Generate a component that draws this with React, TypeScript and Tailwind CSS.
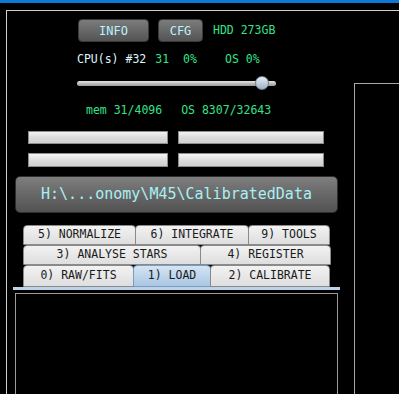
const mono = { fontFamily: '"DejaVu Sans Mono", "Liberation Mono", monospace' };

type Tab = { label: string; w: number; active?: boolean };

const tabRows: { h: number; tabs: Tab[] }[] = [
  {
    h: 20,
    tabs: [
      { label: "5) NORMALIZE", w: 113 },
      { label: "6) INTEGRATE", w: 114 },
      { label: "9) TOOLS", w: 82 },
    ],
  },
  {
    h: 20,
    tabs: [
      { label: "3) ANALYSE STARS", w: 178 },
      { label: "4) REGISTER", w: 131 },
    ],
  },
  {
    h: 22,
    tabs: [
      { label: "0) RAW/FITS", w: 111 },
      { label: "1) LOAD", w: 78, active: true },
      { label: "2) CALIBRATE", w: 120 },
    ],
  },
];

function GrayBar({ w }: { w: number }) {
  return (
    <div
      className="h-full border border-[#8c8c8c] bg-gradient-to-b from-[#f4f4f4] via-[#dcdcdc] to-[#cfcfcf]"
      style={{ width: w }}
    />
  );
}

export default function App() {
  return (
    <div className="w-[399px] h-[394px] bg-black overflow-hidden flex flex-col" style={mono}>
      <div className="h-[3px] bg-[#0a78d4]" />
      <div className="flex-1 pt-[7px] pl-[6px] flex flex-col">
        <div className="flex-1 border-t border-l border-[#d0d0d0] flex">
          {/* left column */}
          <div className="w-[340px] flex flex-col">
            <div className="mt-[8px] ml-[71px] flex items-center h-[23px]">
              <button className="w-[71px] h-[23px] rounded-[4px] border border-[#3a3a3a] bg-gradient-to-b from-[#7c7c7c] to-[#545454] text-[12px] text-[#b6f3ff]">
                INFO
              </button>
              <button className="ml-[9px] w-[45px] h-[23px] rounded-[4px] border border-[#3a3a3a] bg-gradient-to-b from-[#7c7c7c] to-[#545454] text-[12px] text-[#b6f3ff]">
                CFG
              </button>
              <span className="ml-[10px] text-[11.5px] text-[#35e28a]">HDD 273GB</span>
            </div>

            <div className="mt-[10px] ml-[70px] h-[14px] flex items-center text-[11.5px] leading-[14px] whitespace-pre">
              <span className="text-[#dff6ff]">CPU(s) #32</span>
              <span className="ml-[9px] text-[#35e28a]">31</span>
              <span className="ml-[14px] text-[#35e28a]">0%</span>
              <span className="ml-[28px] text-[#35e28a]">OS 0%</span>
            </div>

            <div className="mt-[10px] ml-[70px] w-[199px] h-[14px] relative flex items-center">
              <div className="w-full h-[5px] rounded-full bg-gradient-to-b from-[#e4e4e4] to-[#9a9a9a]" />
              <div className="absolute left-[178px] top-[0px] w-[14px] h-[14px] rounded-full border border-[#6f7f90] bg-gradient-to-b from-[#e6eef6] to-[#9fb3c8]" />
            </div>

            <div className="mt-[13px] ml-[79px] h-[14px] flex items-center text-[11.5px] leading-[14px] text-[#35e28a] whitespace-pre">
              <span>mem 31/4096</span>
              <span className="ml-[19px]">OS 8307/32643</span>
            </div>

            <div className="mt-[14px] ml-[21px] h-[13px] flex gap-[10px]">
              <GrayBar w={140} />
              <GrayBar w={146} />
            </div>
            <div className="mt-[9px] ml-[21px] h-[14px] flex gap-[10px]">
              <GrayBar w={140} />
              <GrayBar w={146} />
            </div>

            <div className="mt-[9px] ml-[8px] w-[323px] h-[37px] rounded-[5px] border border-[#2e2e2e] bg-gradient-to-b from-[#7e7e7e] to-[#525252] flex items-center justify-center text-[15px] text-[#a8f0f4]">
              H:\...onomy\M45\CalibratedData
            </div>

            <div className="mt-[12px] ml-[16px] flex flex-col">
              {tabRows.map((row, i) => (
                <div key={i} className="flex" style={{ height: row.h }}>
                  {row.tabs.map((t, j) => (
                    <div
                      key={t.label}
                      className={
                        t.active
                          ? "h-full flex items-center justify-center rounded-t-[4px] border border-[#7b9cc2] bg-gradient-to-b from-[#d4e4f4] to-[#aac6e2] text-[11.5px] text-[#1a1a1a]"
                          : "h-full flex items-center justify-center rounded-t-[4px] border border-[#8a8a8a] bg-gradient-to-b from-[#f2f2f2] to-[#dedede] text-[11.5px] text-[#1a1a1a]"
                      }
                      style={{ width: t.w, marginLeft: j === 0 ? 0 : -1 }}
                    >
                      {t.label}
                    </div>
                  ))}
                </div>
              ))}
            </div>

            <div className="ml-[6px] w-[327px] h-[3px] bg-[#bcd2e8]" />

            <div className="mt-[3px] ml-[8px] w-[323px] flex-1 border-t border-l border-r border-[#9a9a9a]" />
          </div>

          {/* right panel */}
          <div className="ml-[7px] mt-[72px] flex-1 border-t border-l border-[#a8a8a8]" />
        </div>
      </div>
    </div>
  );
}
